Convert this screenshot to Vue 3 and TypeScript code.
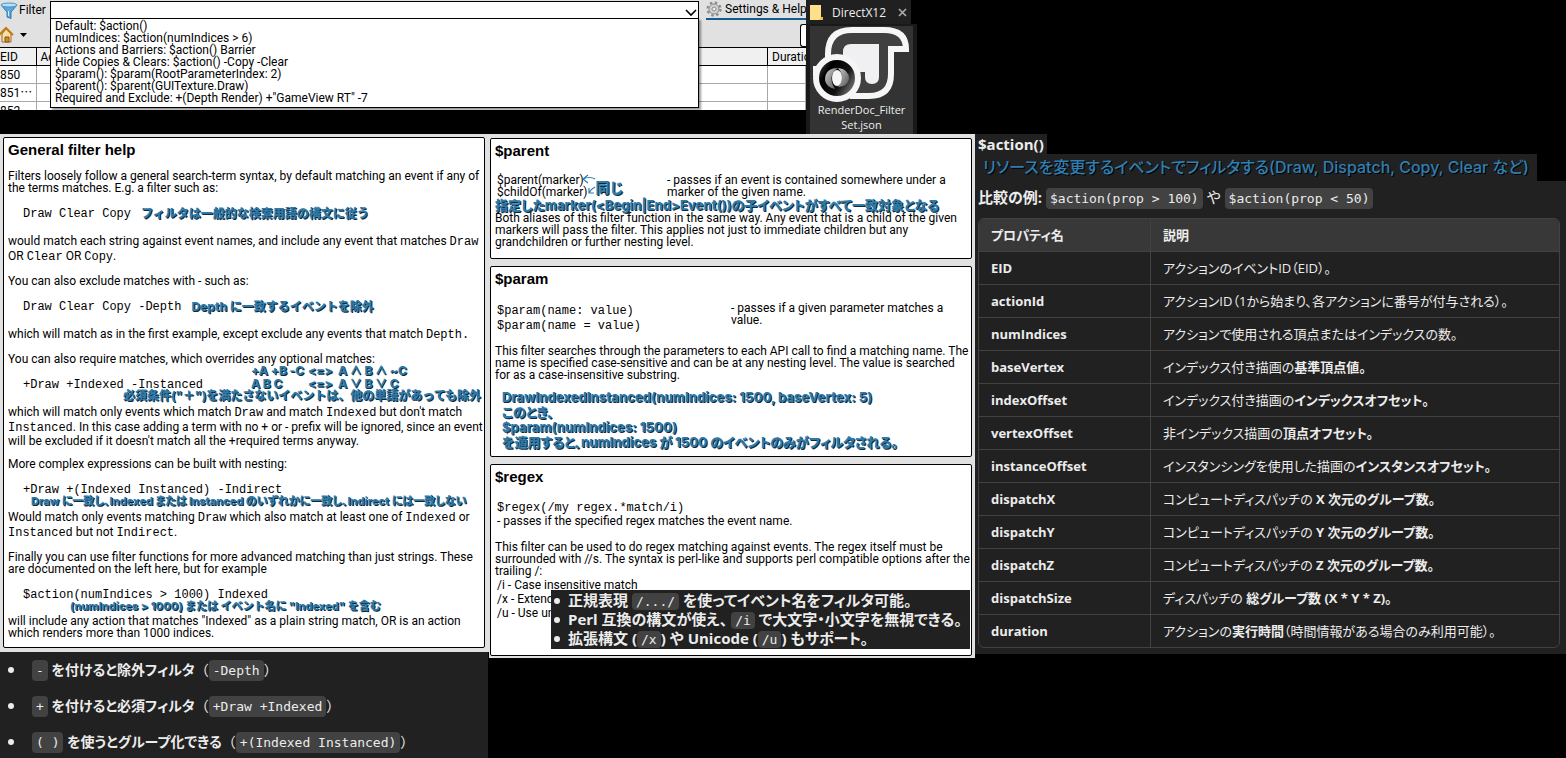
<script setup lang="ts">
interface Prop { name: string; parts: [string, boolean][] }
const presets = [
  'Default: $action()',
  'numIndices: $action(numIndices > 6)',
  'Actions and Barriers: $action() Barrier',
  'Hide Copies & Clears: $action() -Copy -Clear',
  '$param(): $param(RootParameterIndex: 2)',
  '$parent(): $parent(GUITexture.Draw)',
  'Required and Exclude: +(Depth Render) +"GameView RT" -7',
]
const eids = ['850', '851⋯', '852']
const props: Prop[] = [
  { name: 'EID', parts: [['アクションのイベントID（EID）。', false]] },
  { name: 'actionId', parts: [['アクションID（1から始まり、各アクションに番号が付与される）。', false]] },
  { name: 'numIndices', parts: [['アクションで使用される頂点またはインデックスの数。', false]] },
  { name: 'baseVertex', parts: [['インデックス付き描画の', false], ['基準頂点値。', true]] },
  { name: 'indexOffset', parts: [['インデックス付き描画の', false], ['インデックスオフセット。', true]] },
  { name: 'vertexOffset', parts: [['非インデックス描画の', false], ['頂点オフセット。', true]] },
  { name: 'instanceOffset', parts: [['インスタンシングを使用した描画の', false], ['インスタンスオフセット。', true]] },
  { name: 'dispatchX', parts: [['コンピュートディスパッチの ', false], ['X 次元のグループ数。', true]] },
  { name: 'dispatchY', parts: [['コンピュートディスパッチの ', false], ['Y 次元のグループ数。', true]] },
  { name: 'dispatchZ', parts: [['コンピュートディスパッチの ', false], ['Z 次元のグループ数。', true]] },
  { name: 'dispatchSize', parts: [['ディスパッチの ', false], ['総グループ数 (X * Y * Z)。', true]] },
  { name: 'duration', parts: [['アクションの', false], ['実行時間', true], ['（時間情報がある場合のみ利用可能）。', false]] },
]
</script>

<template>
  <div class="page">
    <header class="top">
      <section class="browser">
        <div class="bar">
          <svg class="funnel" width="18" height="17" viewBox="0 0 18 17"><path d="M1 3 L7 10 V15 L11 16.500 V10 L17 3 Z" fill="#58a9dc" stroke="#2f79b5" /><ellipse cx="9" cy="3" rx="8" ry="2" fill="#b9dff6" stroke="#4b93c8" /><path d="M8.500 9v5" stroke="#d7effc" /></svg>
          <label for="filter">Filter</label>
          <div class="combo">
            <input id="filter" type="text" />
            <svg class="chev" width="12" height="8" viewBox="0 0 12 8"><path d="M1 1l5 5 5-5" fill="none" stroke="#000" stroke-width="1.600" /></svg>
            <ul class="popup"><li v-for="p in presets" :key="p">{{ p }}</li></ul>
          </div>
          <button class="settings"><svg width="16" height="16" viewBox="0 0 16 16"><circle cx="8" cy="8" r="6.500" fill="none" stroke="#8c8c8c" stroke-width="2.200" stroke-dasharray="2.600 2.500" /><circle cx="8" cy="8" r="5" fill="#d2d2d2" stroke="#8c8c8c" /><circle cx="8" cy="8" r="2" fill="#eee" stroke="#8c8c8c" /></svg><span>Settings &amp; Help</span></button>
        </div>
        <div class="tools">
          <svg width="32" height="18" viewBox="0 0 32 18"><path d="M2 8v8h9V8L6 3z" fill="#f6dfa4" stroke="#a36a1c" /><path d="M-1 9L6 2l7 7" fill="none" stroke="#c47a17" stroke-width="2" /><path d="M5 16v-5h4v5z" fill="#c98a35" stroke="#8a5514" /><path d="M20 7h7l-3.500 4z" fill="#000" /></svg>
          <button class="tiny" aria-label="Options"></button>
        </div>
        <table class="events">
          <thead><tr><th class="eid">EID</th><th>Action</th><th class="dur">Duration</th></tr></thead>
          <tbody><tr v-for="e in eids" :key="e"><td>{{ e }}</td><td></td><td></td></tr></tbody>
        </table>
      </section>
      <section class="explorer">
        <div class="tab">
          <svg width="14" height="17" viewBox="0 0 14 17"><path d="M0 1h11v12h2v3H0z" fill="#ffe08a" /><path d="M11 13h2v3h-4z" fill="#f1c04c" /></svg>
          <span>DirectX12</span><button aria-label="Close"><svg width="9" height="9" viewBox="0 0 9 9"><path d="M1 1l7 7M8 1L1 8" stroke="#aaa" stroke-width="1.700" /></svg></button>
        </div>
        <div class="body"><div class="file">
          <svg width="102" height="76" viewBox="0 0 102 76">
            <defs>
              <linearGradient id="disc" x1="0" y1="0" x2="1" y2="0.600"><stop offset="0" stop-color="#6a6a6a" /><stop offset="0.350" stop-color="#000" /><stop offset="0.700" stop-color="#111" /><stop offset="1" stop-color="#777" /></linearGradient>
              <linearGradient id="swirl" x1="0" y1="0" x2="1" y2="1"><stop offset="0" stop-color="#ccc" /><stop offset="1" stop-color="#555" /></linearGradient>
            </defs>
            <path d="M18 46V28Q18 4 42 4H74Q96 4 96 23V23H81V48Q81 70 59 70H40" fill="#404040" stroke="#f6f6f6" stroke-width="6" />
            <path d="M33 46V26Q33 18 41 18H69V51Q69 58 62 58T55 51V46Z" fill="#f0f0f2" />
            <path d="M3 40h8v10H3z" fill="#f6f6f6" />
            <circle cx="27" cy="52" r="21" fill="url(#disc)" stroke="#f6f6f6" stroke-width="6" />
            <path d="M28 42Q15 42 15 54Q16 61 25 63Q20 55 22 49Q24 44 28 42Z" fill="url(#swirl)" />
            <path d="M28 42Q39 43 39 53Q38 60 28 61Q33 56 32 50Q31 45 28 42Z" fill="url(#swirl)" />
            <ellipse cx="27" cy="52" rx="5" ry="8" fill="#f6f6f6" />
          </svg>
          <span>RenderDoc_Filter<br />Set.json</span>
        </div></div>
      </section>
    </header>

    <main class="cols">
      <div class="left">
        <section class="frame general">
          <article class="box">
            <h2>General filter help</h2>
            <p>Filters loosely follow a general search-term syntax, by default matching an event if any of<br />the terms matches. E.g. a filter such as:</p>
            <div class="ex"><code>Draw Clear Copy</code><span class="note">フィルタは一般的な検索用語の構文に従う</span></div>
            <p class="mix">would match each string against event names, and include any event that matches <code>Draw</code><br />OR <code>Clear</code> OR <code>Copy</code>.</p>
            <p>You can also exclude matches with - such as:</p>
            <div class="ex"><code>Draw Clear Copy -Depth</code><span class="note">Depth に一致するイベントを除外</span></div>
            <p class="mix">which will match as in the first example, except exclude any events that match <code>Depth.</code></p>
            <p>You can also require matches, which overrides any optional matches:</p>
            <div class="ex"><code>+Draw +Indexed -Instanced</code>
              <div class="note logic"><span>+A +B -C</span><span>&lt;=&gt;</span><span>A ∧ B ∧ ~C</span><span>A B C</span><span>&lt;=&gt;</span><span>A ∨ B ∨ C</span></div>
              <span class="note over must">必須条件("＋")を満たさないイベントは、他の単語があっても除外</span>
            </div>
            <p class="mix">which will match only events which match <code>Draw</code> and match <code>Indexed</code> but don't match<br /><code>Instanced</code>. In this case adding a term with no + or - prefix will be ignored, since an event</p>
            <p class="cont">will be excluded if it doesn't match all the +required terms anyway.</p>
            <p>More complex expressions can be built with nesting:</p>
            <div class="ex"><code>+Draw +(Indexed Instanced) -Indirect</code><span class="note over nest">Draw に一致し、Indexed または Instanced のいずれかに一致し、Indirect には一致しない</span></div>
            <p class="mix">Would match only events matching <code>Draw</code> which also match at least one of <code>Indexed</code> or<br /><code>Instanced</code> but not <code>Indirect</code>.</p>
            <p>Finally you can use filter functions for more advanced matching than just strings. These<br />are documented on the left here, but for example</p>
            <div class="ex"><code>$action(numIndices &gt; 1000) Indexed</code><span class="note over act">(numIndices &gt; 1000) または イベント名に "Indexed" を含む</span></div>
            <p>will include any action that matches "Indexed" as a plain string match, OR is an action<br />which renders more than 1000 indices.</p>
          </article>
        </section>
        <ul class="prefixes">
          <li><code>-</code> <b>を付けると除外フィルタ</b>（<code>-Depth</code>）</li>
          <li><code>+</code> <b>を付けると必須フィルタ</b>（<code>+Draw +Indexed</code>）</li>
          <li><code>( )</code> <b>を使うとグループ化できる</b>（<code>+(Indexed Instanced)</code>）</li>
        </ul>
      </div>

      <section class="frame funcs">
        <article class="box parent">
          <h2>$parent</h2>
          <div class="sig">
            <div class="names">$parent(marker)<br />$childOf(marker)</div>
            <svg class="arrows" width="8" height="24" viewBox="0 0 8 24"><path d="M8 5Q3 2 -4 5M1 1L-4 5l5 4M8 13Q4 15 2 19M2 14v5h5" fill="none" stroke="#2c7cae" stroke-width="1.200" /></svg>
            <span class="note same">同じ</span>
            <p>- passes if an event is contained somewhere under a<br />marker of the given name.</p>
          </div>
          <div class="note marker">指定したmarker(&lt;Begin|End&gt;Event())の子イベントがすべて一致対象となる</div>
          <p class="cont">Both aliases of this filter function in the same way. Any event that is a child of the given<br />markers will pass the filter. This applies not just to immediate children but any<br />grandchildren or further nesting level.</p>
        </article>
        <article class="box param">
          <h2>$param</h2>
          <div class="sig">
            <code>$param(name: value)<br />$param(name = value)</code>
            <p>- passes if a given parameter matches a<br />value.</p>
          </div>
          <p>This filter searches through the parameters to each API call to find a matching name. The<br />name is specified case-sensitive and can be at any nesting level. The value is searched<br />for as a case-insensitive substring.</p>
          <div class="note sample">DrawIndexedInstanced(numIndices: 1500, baseVertex: 5)<br />このとき、<br />$param(numIndices: 1500)<br />を適用すると、numIndices が 1500 のイベントのみがフィルタされる。</div>
        </article>
        <article class="box regex">
          <h2>$regex</h2>
          <div class="sig"><div><code>$regex(/my regex.*match/i)</code><br />- passes if the specified regex matches the event name.</div></div>
          <p>This filter can be used to do regex matching against events. The regex itself must be<br />surrounded with //s. The syntax is perl-like and supports perl compatible options after the<br />trailing /:</p>
          <div class="flags">/i - Case insensitive match<br />/x - Extended syntax<br />/u - Use unicode</div>
          <ul class="card">
            <li>正規表現 <code>/.../</code> を使ってイベント名をフィルタ可能。</li>
            <li>Perl 互換の構文が使え、 <code>/i</code> で大文字・小文字を無視できる。</li>
            <li>拡張構文 (<code>/x</code>) や Unicode (<code>/u</code>) もサポート。</li>
          </ul>
        </article>
      </section>

      <section class="action">
        <h2>$action()</h2>
        <div class="lead">リソースを変更するイベントでフィルタする(Draw, Dispatch, Copy, Clear など)</div>
        <div class="panel">
          <div class="cmp"><b>比較の例:</b> <code>$action(prop &gt; 100)</code> や <code>$action(prop &lt; 50)</code></div>
          <div class="wrap"><table>
            <thead><tr><th>プロパティ名</th><th>説明</th></tr></thead>
            <tbody><tr v-for="p in props" :key="p.name"><th scope="row">{{ p.name }}</th><td><component :is="b ? 'b' : 'span'" v-for="([t, b], i) in p.parts" :key="i">{{ t }}</component></td></tr></tbody>
          </table></div>
        </div>
      </section>
    </main>
  </div>
</template>

<style>
body { margin: 0; background: #000; }
</style>

<style scoped>
* { box-sizing: border-box; }
.page { min-height: 100vh; background: #000; color: #000; font: 12px/12px Roboto, "Noto Sans CJK JP", sans-serif; white-space: nowrap; overflow: hidden; }
h2, p, ul { margin: 0; padding: 0; }
ul { list-style: none; }
button { border: 0; padding: 0; background: none; font: inherit; color: inherit; white-space: nowrap; }
code { font-family: "Liberation Mono", monospace; font-size: 12px; line-height: 0; }

.top { display: grid; grid-template-columns: minmax(0, 806fr) minmax(0, 111fr) minmax(0, 649fr); height: 134px; }
.browser { height: 110px; background: #e1e1e1; overflow: hidden; }
.bar { display: flex; align-items: center; height: 20px; }
.funnel { flex: none; }
.bar label { width: 30px; margin: 0 1px; }
.combo { position: relative; flex: 1; height: 18px; margin-top: -1px; }
.combo input { display: block; width: 100%; height: 18px; border: 1px solid #000; background: #fff; outline: 0; padding: 0 4px; }
.chev { position: absolute; right: 2px; top: 8px; }
.popup { position: absolute; z-index: 2; top: 17px; left: 0; right: 0; height: 90px; padding: 1px 4px; border: 1px solid #000; background: #fff; box-shadow: 2px 2px 2px #0006; }
.settings { display: flex; align-items: center; gap: 3px; width: 100px; height: 20px; margin-left: 7px; overflow: hidden; border-bottom: 2px solid #135d8e; }
.settings svg { flex: none; }
.tools { display: flex; justify-content: space-between; align-items: center; height: 27px; padding-top: 3px; }
.tiny { width: 6px; height: 23px; border: 1px solid #000; border-right: 0; border-radius: 3px 0 0 3px; background: #fff; }
.events { width: 100%; border-collapse: collapse; table-layout: fixed; background: #fff; }
.events th { height: 18px; padding: 0 4px; border: 1px solid #000; background: #f0f0f0; font-weight: 400; text-align: left; overflow: hidden; }
.events th.eid { width: 36px; padding: 0; border-left: 0; }
.events th.dur { width: 38px; border-right: 0; }
.events td { height: 18px; padding: 0; border: 1px solid #a8a8a8; border-width: 0 1px 1px 0; }

.explorer { display: flex; flex-direction: column; background: #000; color: #eee; font: 11px/15px "Open Sans", sans-serif; }
.tab { display: flex; align-items: center; gap: 8px; width: 105px; height: 24px; padding-left: 4px; background: #202020; font-size: 12px; }
.tab button { display: flex; margin-left: 4px; }
.body { flex: 1; padding: 2px 4px 0; background: #191919; }
.file { height: 100%; background: #333; text-align: center; }
.file svg { display: block; }

.cols { display: grid; grid-template-columns: minmax(0, 489fr) minmax(0, 486fr) minmax(0, 591fr); align-items: start; }
.frame { background: #e1e1e1; }
.general { padding: 3px 4px 4px 3px; }
.box { position: relative; padding: 3px 4px 8px; border: 1px solid #000; border-radius: 2px; background: #fff; }
.box h2 { font: 700 15px/18px "Liberation Sans", sans-serif; margin-bottom: 10px; }
.box p { margin-top: 11px; }
.box p.mix { line-height: 15px; }
.box p.cont { margin-top: 0; }
.ex { position: relative; display: flex; align-items: center; gap: 10px; height: 14px; margin: 13px 0; padding-left: 15px; }
.note { color: #2f7aa8; font-family: Inter, "Noto Sans CJK JP", sans-serif; font-size: 12px; font-weight: 800; font-variant-ligatures: none; text-shadow: 1px 1px 0 #10293a; }
.logic { position: absolute; left: 243px; top: -14px; display: grid; grid-template-columns: 57px 30px auto; line-height: 13px; }
.over { position: absolute; top: 12px; }
.must { left: 115px; }
.nest { left: 23px; font-size: 11px; font-feature-settings: "palt"; }
.act { left: 62px; font-size: 11px; }

.prefixes { height: 106px; margin-right: 1px; padding: 0 0 0 32px; background: #212121; color: #ececec; font: 14px/36px "Open Sans", "Noto Sans CJK JP", sans-serif; overflow: hidden; }
.prefixes b { font-feature-settings: "palt"; }
.prefixes li, .card li { position: relative; }
.prefixes li::before, .card li::before { content: ""; position: absolute; left: -24px; top: 50%; width: 6px; height: 6px; margin-top: -3px; border-radius: 50%; background: currentColor; }
.prefixes code, .card code, .cmp code { padding: 3px 4px; border-radius: 4px; background: #424242; font: 13px/16px "DejaVu Sans Mono", monospace; }

.funcs { padding: 4px 3px 2px 1px; }
.funcs .box { margin-bottom: 7px; }
.funcs .box:last-child { margin-bottom: 0; }
.parent { height: 121px; }
.param { height: 191px; }
.regex { height: 192px; }
.sig { display: flex; padding-left: 2px; }
.sig p { margin: 0 0 0 auto; }
.card { position: absolute; right: 1px; bottom: 6px; width: 419px; padding: 1px 0 1px 17px; background: #212121; color: #ececec; font: 700 15px/19px "Open Sans", "Noto Sans CJK JP", sans-serif; font-feature-settings: "palt"; }
.card li::before { left: -14px; }
.card code { padding: 1px 4px; }
.parent .sig { margin-top: 14px; }
.arrows { overflow: visible; }
.box.parent .sig p { width: 300px; margin-top: 0; }
.same { font-size: 14px; line-height: 28px; height: 24px; }
.marker { font-size: 13px; line-height: 14px; font-feature-settings: "palt"; }
.param .sig { margin-top: 14px; }
.box.param .sig p { width: 236px; margin-top: 0; }
.param .sig code { line-height: 15px; padding-top: 2px; }
.sample { font-size: 13px; line-height: 15px; padding: 9px 0 0 7px; font-feature-settings: "palt"; }
.regex .sig { margin-top: 14px; line-height: 14px; }
.box.regex p { margin-top: 13px; }
.flags { line-height: 14px; padding: 1px 0 0 2px; }

.action { color: #ececec; font: 13px/20px "Open Sans", "Noto Sans CJK JP", sans-serif; font-feature-settings: "palt"; }
.action h2 { width: max-content; padding: 0 3px; font-size: 15px; line-height: 20px; background: #212121; }
.lead { width: max-content; padding: 0 8px; line-height: 27px; font-family: Inter, "Noto Sans CJK JP", sans-serif; font-size: 16px; font-weight: 500; color: #2f7fb2; background: #212121; text-shadow: 1px 1px 0 #000; }
.panel { padding: 2px 6px 6px 3px; background: #212121; }
.cmp { height: 28px; line-height: 28px; margin-bottom: 7px; font-size: 15px; }
.wrap { border: 1px solid #424242; border-radius: 6px; overflow: hidden; }
.wrap table { width: 100%; border-collapse: separate; border-spacing: 0; table-layout: fixed; }
.wrap th, .wrap td { height: 33px; padding: 0 12px; text-align: left; border-top: 1px solid #424242; }
.wrap th:first-child { width: 172px; border-right: 1px solid #424242; }
.wrap thead th { height: 32px; background: #383838; border-top: 0; }
</style>
